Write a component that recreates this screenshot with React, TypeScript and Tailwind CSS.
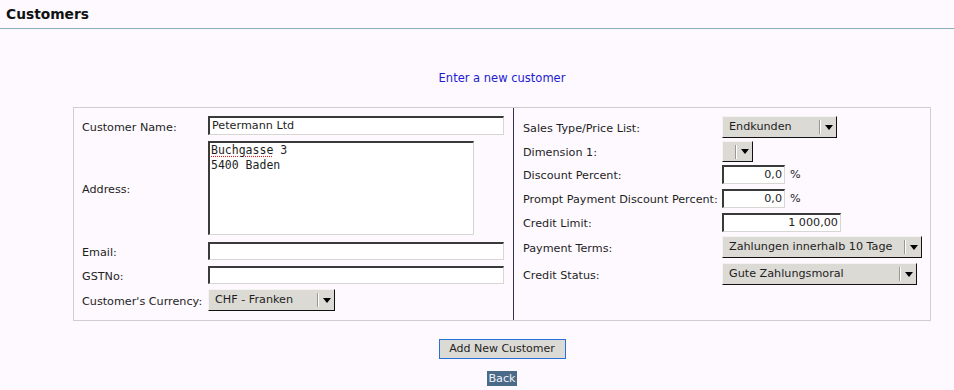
import React from 'react';

const inputCls =
  'bg-white border-t-2 border-l-2 border-b border-r border-t-[#3a3a3a] border-l-[#3a3a3a] border-b-[#d8d6d2] border-r-[#d8d6d2] px-[2px] pt-[1px] flex items-center';

const Select: React.FC<{ value: string; width: string; height?: string }> = ({ value, width, height = 'h-[22px]' }) => (
  <div
    className={`${width} ${height} bg-[#dcdad5] border-t border-l border-b border-r border-t-[#f4f3f1] border-l-[#f4f3f1] border-b-[#111] border-r-[#111] flex items-center`}
  >
    <span className="flex-1 pl-[6px] pt-[1px] whitespace-nowrap overflow-hidden">{value}</span>
    <div className="h-[14px] w-[2px] border-l border-l-[#9a9893] border-r border-r-[#ffffff]" />
    <div className="w-[15px] flex items-center justify-center">
      <svg width="8" height="5" viewBox="0 0 8 5">
        <polygon points="0,0 8,0 4,5" fill="#000" />
      </svg>
    </div>
  </div>
);

const LeftRow: React.FC<{ label: string; className?: string; children: React.ReactNode }> = ({ label, className = '', children }) => (
  <div className={`flex items-center ${className}`}>
    <div className="w-[126px] pt-[4px] leading-[12px] whitespace-nowrap">{label}</div>
    {children}
  </div>
);

const RightRow: React.FC<{ label: string; className?: string; children: React.ReactNode }> = ({ label, className = '', children }) => (
  <div className={`flex items-center ${className}`}>
    <div className="w-[199px] pt-[3px] leading-[12px] whitespace-nowrap">{label}</div>
    {children}
  </div>
);

export default function App() {
  return (
    <div className="w-[954px] h-[390px] overflow-hidden bg-[#fdf9fe] font-['DejaVu_Sans',sans-serif] text-[11.2px] text-[#1e1e1e]">
      <div className="h-[29px] border-b border-b-[#87aebb] px-[6px] flex items-center">
        <span className="font-bold text-[13.8px] text-[#111]">Customers</span>
      </div>

      <div className="w-[1004px] flex flex-col items-center">
        <div className="mt-[42px] text-[11.5px] leading-[14px] text-[#1c1cd0]">Enter a new customer</div>

        <div className="mt-[22px] w-[858px] h-[214px] border border-[#cfcdd0] flex">
          {/* left column */}
          <div className="w-[439px] pt-[8px] pl-[8px]">
            <LeftRow label="Customer Name:">
              <div className={`${inputCls} w-[296px] h-[19px]`}>Petermann Ltd</div>
            </LeftRow>
            <LeftRow label="Address:" className="mt-[6px]">
              <div className="w-[266px] h-[94px] bg-white border-t-2 border-l-2 border-b border-r border-t-[#3a3a3a] border-l-[#3a3a3a] border-b-[#d8d6d2] border-r-[#d8d6d2] px-[1px] font-['DejaVu_Sans_Mono',monospace] text-[11.5px] leading-[15px]">
                <div>
                  <span className="underline decoration-dotted decoration-[#e02020] underline-offset-2">Buchgasse</span> 3
                </div>
                <div>5400 Baden</div>
              </div>
            </LeftRow>
            <LeftRow label="Email:" className="mt-[7px]">
              <div className={`${inputCls} w-[296px] h-[18px]`} />
            </LeftRow>
            <LeftRow label="GSTNo:" className="mt-[6px]">
              <div className={`${inputCls} w-[296px] h-[18px]`} />
            </LeftRow>
            <LeftRow label="Customer's Currency:" className="mt-[5px]">
              <Select value="CHF - Franken" width="w-[127px]" />
            </LeftRow>
          </div>

          <div className="w-px bg-[#34344e]" />

          {/* right column */}
          <div className="flex-1 pt-[8px] pl-[9px]">
            <RightRow label="Sales Type/Price List:">
              <Select value="Endkunden" width="w-[115px]" />
            </RightRow>
            <RightRow label="Dimension 1:" className="mt-[3px]">
              <Select value="" width="w-[31px]" height="h-[21px]" />
            </RightRow>
            <RightRow label="Discount Percent:" className="mt-[3px]">
              <div className={`${inputCls} w-[63px] h-[19px] justify-end`}>0,0</div>
              <span className="ml-[5px] pt-[1px] leading-[14px]">%</span>
            </RightRow>
            <RightRow label="Prompt Payment Discount Percent:" className="mt-[5px]">
              <div className={`${inputCls} w-[63px] h-[19px] justify-end`}>0,0</div>
              <span className="ml-[5px] pt-[1px] leading-[14px]">%</span>
            </RightRow>
            <RightRow label="Credit Limit:" className="mt-[5px]">
              <div className={`${inputCls} w-[119px] h-[19px] justify-end`}>1 000,00</div>
            </RightRow>
            <RightRow label="Payment Terms:" className="mt-[4px]">
              <Select value="Zahlungen innerhalb 10 Tage" width="w-[200px]" />
            </RightRow>
            <RightRow label="Credit Status:" className="mt-[5px]">
              <Select value="Gute Zahlungsmoral" width="w-[195px]" />
            </RightRow>
          </div>
        </div>

        <button
          type="button"
          className="mt-[18px] w-[127px] h-[20px] border border-[#2a6fd6] bg-[#dcdad5] text-[11px] text-[#1e1e1e] flex items-center justify-center"
        >
          Add New Customer
        </button>

        <a className="mt-[12px] h-[15px] leading-[15px] px-[1px] bg-[#4b6a88] text-[#eef2f7] text-[11.2px]">Back</a>
      </div>
    </div>
  );
}
